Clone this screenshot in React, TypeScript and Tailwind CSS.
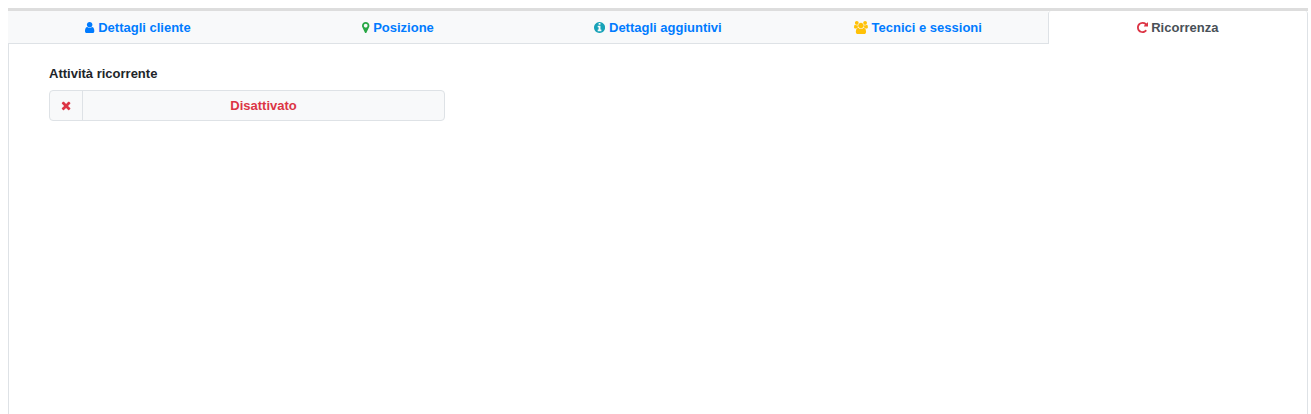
import React from "react";

// Font Awesome 4 glyphs, sized like a 13px icon font
const paths = {
  user: "M1536 1399q0 109-62.500 187t-150.500 78h-854q-88 0-150.500-78t-62.500-187q0-85 8.500-160.500t31.500-152 58.500-131 94-89 134.500-34.500q131 128 313 128t313-128q76 0 134.500 34.500t94 89 58.500 131 31.500 152 8.500 160.500zm-256-887q0 159-112.500 271.500t-271.500 112.500-271.500-112.500-112.500-271.500 112.500-271.500 271.500-112.500 271.500 112.500 112.500 271.500z",
  marker: "M768 640q0-106-75-181t-181-75-181 75-75 181 75 181 181 75 181-75 75-181zm256 0q0 109-33 179l-364 774q-16 33-47.500 52t-67.500 19-67.500-19-46.500-52l-365-774q-33-70-33-179 0-212 150-362t362-150 362 150 150 362z",
  info: "M1152 1376v-160q0-14-9-23t-23-9h-96v-512q0-14-9-23t-23-9h-320q-14 0-23 9t-9 23v160q0 14 9 23t23 9h96v320h-96q-14 0-23 9t-9 23v160q0 14 9 23t23 9h448q14 0 23-9t9-23zm-128-896v-160q0-14-9-23t-23-9h-192q-14 0-23 9t-9 23v160q0 14 9 23t23 9h192q14 0 23-9t9-23zm640 416q0 209-103 385.500t-279.500 279.500-385.500 103-385.500-103-279.500-279.500-103-385.500 103-385.500 279.500-279.500 385.500-103 385.500 103 279.500 279.500 103 385.500z",
  users: "M593 896q-162 5-265 128h-134q-82 0-138-40.500t-56-118.500q0-353 124-353 6 0 43.500 21t97.500 42.500 119 21.500q67 0 133-23-5 37-5 66 0 139 81 256zm1071 637q0 120-73 189.500t-194 69.500h-874q-121 0-194-69.500t-73-189.500q0-53 3.500-103.500t14-109 26.500-108.500 43-97.500 62-81 85.500-53.500 111.500-20q10 0 43 21.500t73 48 107 48 135 21.500 135-21.500 107-48 73-48 43-21.500q61 0 111.500 20t85.500 53.500 62 81 43 97.500 26.500 108.500 14 109 3.500 103.500zm-1024-1277q0 106-75 181t-181 75-181-75-75-181 75-181 181-75 181 75 75 181zm704 384q0 159-112.500 271.500t-271.500 112.500-271.500-112.500-112.500-271.500 112.500-271.500 271.500-112.500 271.500 112.500 112.500 271.500zm576 225q0 78-56 118.500t-138 40.500h-134q-103-123-265-128 81-117 81-256 0-29-5-66 66 23 133 23 59 0 119-21.500t97.500-42.500 43.500-21q124 0 124 353zm-128-609q0 106-75 181t-181 75-181-75-75-181 75-181 181-75 181 75 75 181z",
  repeat: "M1664 256v448q0 26-19 45t-45 19h-448q-42 0-59-40-17-39 14-69l138-138q-148-137-349-137-104 0-198.500 40.500t-163.500 109.500-109.500 163.500-40.500 198.500 40.500 198.500 109.500 163.500 163.500 109.500 198.500 40.500q119 0 225-52t179-147q7-10 23-12 15 0 25 9l137 138q9 8 9.500 20.500t-7.500 22.500q-109 132-264 204.500t-327 72.500q-156 0-298-61t-245-164-164-245-61-298 61-298 164-245 245-164 298-61q147 0 284.500 55.500t244.500 156.500l130-129q29-31 70-14 39 17 39 59z",
  times: "M1490 1322q0 40-28 68l-136 136q-28 28-68 28t-68-28l-294-294-294 294q-28 28-68 28t-68-28l-136-136q-28-28-28-68t28-68l294-294-294-294q-28-28-28-68t28-68l136-136q28-28 68-28t68 28l294 294 294-294q28-28 68-28t68 28l136 136q28 28 28 68t-28 68l-294 294 294 294q28 28 28 68z",
};

function Icon({ d, viewBox, className }: { d: string; viewBox: string; className: string }) {
  return (
    <svg viewBox={viewBox} className={className} fill="currentColor">
      <path d={d} />
    </svg>
  );
}

const tabs = [
  { label: "Dettagli cliente", icon: <Icon d={paths.user} viewBox="256 0 1280 1792" className="w-[9.3px] h-[13px] text-[#007bff]" /> },
  { label: "Posizione", icon: <Icon d={paths.marker} viewBox="0 0 1024 1792" className="w-[7.4px] h-[13px] text-[#28a745]" /> },
  { label: "Dettagli aggiuntivi", icon: <Icon d={paths.info} viewBox="128 0 1536 1792" className="w-[11.1px] h-[13px] text-[#17a2b8]" /> },
  { label: "Tecnici e sessioni", icon: <Icon d={paths.users} viewBox="0 0 1920 1792" className="w-[13.9px] h-[13px] text-[#ffc107]" /> },
];

export default function App() {
  return (
    <div className="h-[414px] bg-white pl-2 pr-[3px] pt-2 font-['Liberation_Sans',sans-serif] text-[13px] overflow-hidden">
      <div className="h-full border-t-[3px] border-[#dddddd] flex flex-col">
        <div className="flex h-[33px] shrink-0">
          {tabs.map((t) => (
            <div
              key={t.label}
              className="w-[260px] flex items-center justify-center gap-[3.6px] pt-px bg-[#f8f9fa] border-b border-[#dee2e6] font-bold text-[#007bff]"
            >
              {t.icon}
              <span>{t.label}</span>
            </div>
          ))}
          <div className="w-[260px] flex items-center justify-center gap-[3.6px] pr-px bg-white border-x border-[#dee2e6] rounded-t-[3px] font-bold text-[#495057]">
            <Icon d={paths.repeat} viewBox="128 0 1536 1792" className="w-[11.1px] h-[13px] text-[#dc3545]" />
            <span>Ricorrenza</span>
          </div>
        </div>
        <div className="flex-1 border-x border-[#dee2e6] pl-10 pt-[21px]">
          <div className="font-bold text-[#212529] leading-[18px] mb-[7px]">Attività ricorrente</div>
          <div className="flex w-[396px] h-[31px] bg-[#f8f9fa] border border-[#dee2e6] rounded-[4px]">
            <div className="w-[33px] flex items-center justify-center border-r border-[#dee2e6]">
              <Icon d={paths.times} viewBox="192 0 1408 1792" className="w-[10.2px] h-[13px] text-[#dc3545]" />
            </div>
            <div className="flex-1 flex items-center justify-center font-bold text-[#dc3545]">Disattivato</div>
          </div>
        </div>
      </div>
    </div>
  );
}
